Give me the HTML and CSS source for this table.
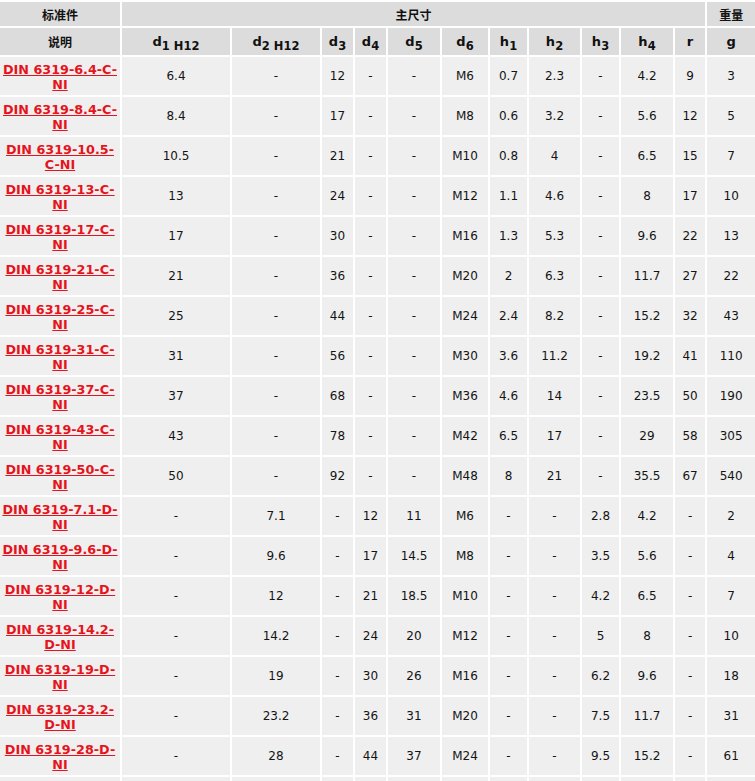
FILE: index.html
```html
<!DOCTYPE html>
<html lang="zh">
<head>
<meta charset="utf-8">
<title>DIN 6319 NI</title>
<link rel="stylesheet" href="styles.css">
</head>
<body>
<table class="spec">
  <colgroup>
    <col class="c-name"><col class="c-d1"><col class="c-d2"><col class="c-d3"><col class="c-d4"><col class="c-d5"><col class="c-d6"><col class="c-h1"><col class="c-h2"><col class="c-h3"><col class="c-h4"><col class="c-r"><col class="c-g">
  </colgroup>
  <thead>
    <tr class="head-top">
      <th class="cjk">标准件</th>
      <th class="cjk" colspan="11">主尺寸</th>
      <th class="cjk">重量</th>
    </tr>
    <tr class="head-sub">
      <th class="cjk">说明</th>
      <th>d<sub>1 H12</sub></th>
      <th>d<sub>2 H12</sub></th>
      <th>d<sub>3</sub></th>
      <th>d<sub>4</sub></th>
      <th>d<sub>5</sub></th>
      <th>d<sub>6</sub></th>
      <th>h<sub>1</sub></th>
      <th>h<sub>2</sub></th>
      <th>h<sub>3</sub></th>
      <th>h<sub>4</sub></th>
      <th>r</th>
      <th>g</th>
    </tr>
  </thead>
  <tbody>
    <tr><td class="name"><a href="#">DIN 6319-6.4-C-NI</a></td><td>6.4</td><td>-</td><td>12</td><td>-</td><td>-</td><td>M6</td><td>0.7</td><td>2.3</td><td>-</td><td>4.2</td><td>9</td><td>3</td></tr>
    <tr><td class="name"><a href="#">DIN 6319-8.4-C-NI</a></td><td>8.4</td><td>-</td><td>17</td><td>-</td><td>-</td><td>M8</td><td>0.6</td><td>3.2</td><td>-</td><td>5.6</td><td>12</td><td>5</td></tr>
    <tr><td class="name"><a href="#">DIN 6319-10.5-C-NI</a></td><td>10.5</td><td>-</td><td>21</td><td>-</td><td>-</td><td>M10</td><td>0.8</td><td>4</td><td>-</td><td>6.5</td><td>15</td><td>7</td></tr>
    <tr><td class="name"><a href="#">DIN 6319-13-C-NI</a></td><td>13</td><td>-</td><td>24</td><td>-</td><td>-</td><td>M12</td><td>1.1</td><td>4.6</td><td>-</td><td>8</td><td>17</td><td>10</td></tr>
    <tr><td class="name"><a href="#">DIN 6319-17-C-NI</a></td><td>17</td><td>-</td><td>30</td><td>-</td><td>-</td><td>M16</td><td>1.3</td><td>5.3</td><td>-</td><td>9.6</td><td>22</td><td>13</td></tr>
    <tr><td class="name"><a href="#">DIN 6319-21-C-NI</a></td><td>21</td><td>-</td><td>36</td><td>-</td><td>-</td><td>M20</td><td>2</td><td>6.3</td><td>-</td><td>11.7</td><td>27</td><td>22</td></tr>
    <tr><td class="name"><a href="#">DIN 6319-25-C-NI</a></td><td>25</td><td>-</td><td>44</td><td>-</td><td>-</td><td>M24</td><td>2.4</td><td>8.2</td><td>-</td><td>15.2</td><td>32</td><td>43</td></tr>
    <tr><td class="name"><a href="#">DIN 6319-31-C-NI</a></td><td>31</td><td>-</td><td>56</td><td>-</td><td>-</td><td>M30</td><td>3.6</td><td>11.2</td><td>-</td><td>19.2</td><td>41</td><td>110</td></tr>
    <tr><td class="name"><a href="#">DIN 6319-37-C-NI</a></td><td>37</td><td>-</td><td>68</td><td>-</td><td>-</td><td>M36</td><td>4.6</td><td>14</td><td>-</td><td>23.5</td><td>50</td><td>190</td></tr>
    <tr><td class="name"><a href="#">DIN 6319-43-C-NI</a></td><td>43</td><td>-</td><td>78</td><td>-</td><td>-</td><td>M42</td><td>6.5</td><td>17</td><td>-</td><td>29</td><td>58</td><td>305</td></tr>
    <tr><td class="name"><a href="#">DIN 6319-50-C-NI</a></td><td>50</td><td>-</td><td>92</td><td>-</td><td>-</td><td>M48</td><td>8</td><td>21</td><td>-</td><td>35.5</td><td>67</td><td>540</td></tr>
    <tr><td class="name"><a href="#">DIN 6319-7.1-D-NI</a></td><td>-</td><td>7.1</td><td>-</td><td>12</td><td>11</td><td>M6</td><td>-</td><td>-</td><td>2.8</td><td>4.2</td><td>-</td><td>2</td></tr>
    <tr><td class="name"><a href="#">DIN 6319-9.6-D-NI</a></td><td>-</td><td>9.6</td><td>-</td><td>17</td><td>14.5</td><td>M8</td><td>-</td><td>-</td><td>3.5</td><td>5.6</td><td>-</td><td>4</td></tr>
    <tr><td class="name"><a href="#">DIN 6319-12-D-NI</a></td><td>-</td><td>12</td><td>-</td><td>21</td><td>18.5</td><td>M10</td><td>-</td><td>-</td><td>4.2</td><td>6.5</td><td>-</td><td>7</td></tr>
    <tr><td class="name"><a href="#">DIN 6319-14.2-D-NI</a></td><td>-</td><td>14.2</td><td>-</td><td>24</td><td>20</td><td>M12</td><td>-</td><td>-</td><td>5</td><td>8</td><td>-</td><td>10</td></tr>
    <tr><td class="name"><a href="#">DIN 6319-19-D-NI</a></td><td>-</td><td>19</td><td>-</td><td>30</td><td>26</td><td>M16</td><td>-</td><td>-</td><td>6.2</td><td>9.6</td><td>-</td><td>18</td></tr>
    <tr><td class="name"><a href="#">DIN 6319-23.2-D-NI</a></td><td>-</td><td>23.2</td><td>-</td><td>36</td><td>31</td><td>M20</td><td>-</td><td>-</td><td>7.5</td><td>11.7</td><td>-</td><td>31</td></tr>
    <tr><td class="name"><a href="#">DIN 6319-28-D-NI</a></td><td>-</td><td>28</td><td>-</td><td>44</td><td>37</td><td>M24</td><td>-</td><td>-</td><td>9.5</td><td>15.2</td><td>-</td><td>61</td></tr>
    <tr class="row-next"><td></td><td></td><td></td><td></td><td></td><td></td><td></td><td></td><td></td><td></td><td></td><td></td><td></td></tr>
  </tbody>
</table>
</body>
</html>
```
FILE: styles.css
```css
html, body {
  margin: 0;
  padding: 0;
  background: #ffffff;
  overflow-x: hidden;
}

.spec {
  table-layout: fixed;
  width: 757px;
  margin: 0 0 0 -2px;
  border-collapse: separate;
  border-spacing: 2px;
  font-family: "DejaVu Sans", Verdana, sans-serif;
  font-size: 12px;
  color: #141414;
}

.c-name { width: 120px; }
.c-d1 { width: 108px; }
.c-d2 { width: 88px; }
.c-d3 { width: 31px; }
.c-d4 { width: 31px; }
.c-d5 { width: 52px; }
.c-d6 { width: 46px; }
.c-h1 { width: 37px; }
.c-h2 { width: 51px; }
.c-h3 { width: 37px; }
.c-h4 { width: 52px; }
.c-r { width: 30px; }
.c-g { width: 48px; }

.spec th,
.spec td {
  padding: 0 1px;
  text-align: center;
  vertical-align: middle;
  box-sizing: border-box;
}

.spec th {
  background: #dcdcdc;
  font-weight: bold;
  font-size: 13px;
  color: #111111;
  white-space: nowrap;
}

.spec th.cjk {
  font-family: "Noto Sans CJK SC", "DejaVu Sans", sans-serif;
  font-size: 12px;
}

.spec th sub {
  font-size: 11.5px;
  vertical-align: -4px;
  line-height: 0;
}

.head-top th { height: 24px; }
.head-sub th { height: 27px; }

.spec td {
  background: #efefef;
  height: 38px;
  line-height: 15px;
  padding-top: 1px;
}

.spec td.name {
  font-size: 12.75px;
  font-weight: bold;
  padding: 1px 1px 0;
}

.spec td.name a {
  color: #e5141c;
  text-decoration: underline;
}
```
